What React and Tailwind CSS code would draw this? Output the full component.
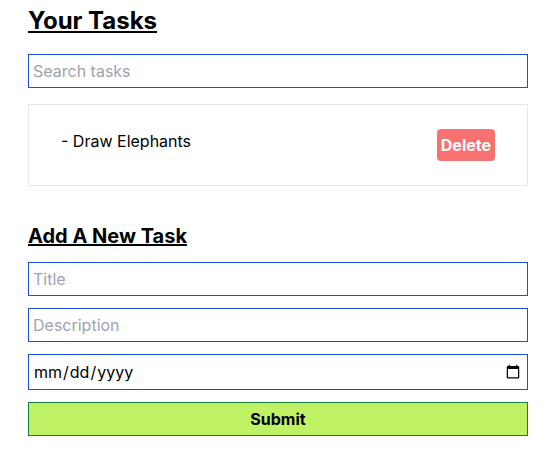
import React, { useState } from 'react';

function TaskItem({ task, onDelete }) {
  return (
    <div className="flex justify-between items-start border border-gray-200 px-8 py-6">
      <p className="leading-6">- {task.title}</p>
      <button
        className="bg-[#f87171] text-white font-bold rounded px-1 py-1 leading-6"
        onClick={() => onDelete(task.id)}
      >
        Delete
      </button>
    </div>
  );
}

export default function App() {
  const [tasks, setTasks] = useState([{ id: 1, title: 'Draw Elephants' }]);
  const [search, setSearch] = useState('');

  const inputClass =
    'w-full border border-[#1d4ed8] px-1 py-1 leading-6 text-base placeholder:text-[#9ca3af] outline-none';

  return (
    <div className="px-7 pt-[5px] text-black bg-white min-h-screen" style={{ fontFamily: 'Inter, "Liberation Sans", sans-serif' }}>
      <h1 className="text-2xl leading-8 font-bold underline w-fit">Your Tasks</h1>
      <input
        className={`${inputClass} mt-[17px]`}
        placeholder="Search tasks"
        value={search}
        onChange={(e) => setSearch(e.target.value)}
      />
      <div className="mt-4">
        {tasks
          .filter((t) => t.title.toLowerCase().includes(search.toLowerCase()))
          .map((task) => (
            <TaskItem key={task.id} task={task} onDelete={(id) => setTasks(tasks.filter((t) => t.id !== id))} />
          ))}
      </div>

      <h2 className="text-xl leading-7 font-bold underline mt-[36px]">Add A New Task</h2>
      <form className="flex flex-col gap-3 mt-[12px]" onSubmit={(e) => e.preventDefault()}>
        <input className={inputClass} placeholder="Title" />
        <input className={inputClass} placeholder="Description" />
        <input type="date" className={`${inputClass} h-9`} />
        <button type="submit" className="w-full bg-[#bef264] border border-[#15803d] py-1 leading-6 font-bold">
          Submit
        </button>
      </form>
    </div>
  );
}
